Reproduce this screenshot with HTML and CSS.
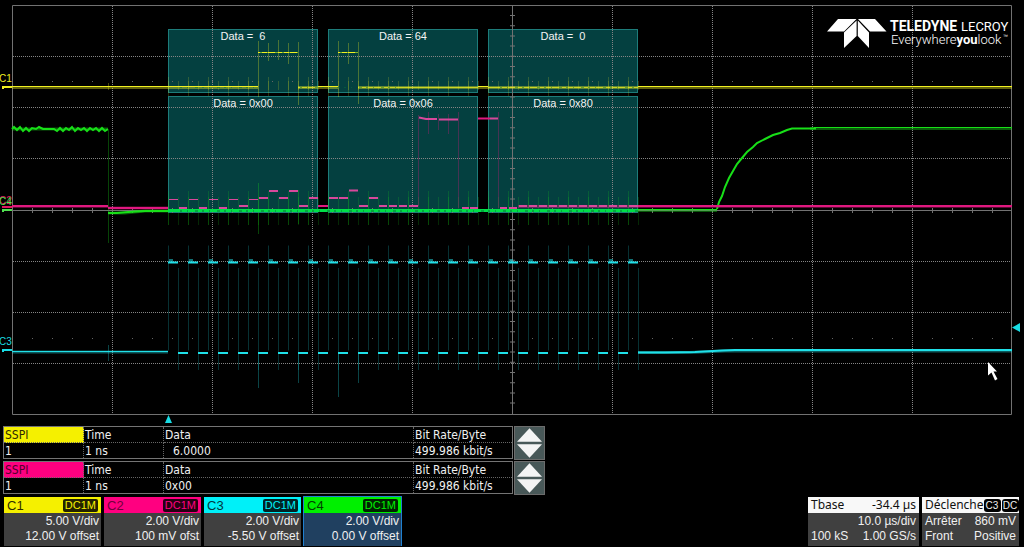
FILE: index.html
```html
<!DOCTYPE html>
<html lang="fr">
<head>
<meta charset="utf-8">
<title>Teledyne LeCroy</title>
<link rel="stylesheet" href="styles.css">
</head>
<body>
<main class="scope">
<svg class="screen" viewBox="0 0 1024 425" role="img" aria-label="SPI waveforms">
  <g class="decode">
    <rect x="168.500" y="29.500" width="149" height="63"/>
    <rect x="328.500" y="29.500" width="149" height="63"/>
    <rect x="488.500" y="29.500" width="149" height="63"/>
    <rect x="168.500" y="96.500" width="149" height="116"/>
    <rect x="328.500" y="96.500" width="149" height="116"/>
    <rect x="488.500" y="96.500" width="149" height="116"/>
  </g>

  <path class="grid-dots" d="M13 56.500H1012M13 107.500H1012M13 158.500H1012M13 261.500H1012M13 312.500H1012M13 363.500H1012M112.500 6V414M212.500 6V414M312.500 6V414M412.500 6V414M612.500 6V414M712.500 6V414M812.500 6V414M912.500 6V414"/>
  <path class="tick-dots" d="M32 81.500H1011M32 338.500H1011"/>
  <path class="grid-line" d="M12.500 5.500H1011.500V414.500H12.500ZM12.500 210.500H1012M512.500 5V414"/>
  <path class="ticks-x" d="M32 210.500H1011"/>
  <path class="ticks-y" d="M512.500 15V411"/>

  <!-- C1, data -->
  <g class="c1">
    <path class="spikes" stroke-width="9" d="M168 85.500H639"/>
    <path class="spikes alt" stroke-width="19" d="M168 86.500H639"/>
    <path class="edge" d="M258.500 41V97M268.500 43V61M278.500 40V60M288.500 43V64M298.500 42V105M338.500 41V97M348.500 43V64M358.500 42V104M108.500 83V90"/>
    <path class="noise" d="M12 87.500H258M298 87.500H338M358 87.500H1012"/>
    <path class="trace thin" d="M12 86.500H258M258 52.500H298M338 52.500H358M318 86.500H338M478 86.500H488M638 86.500H1012"/>
    <path class="trace thin" d="M298 87.500H318M358 87.500H478M488 87.500H638" stroke-opacity=".75"/>
    <path class="speck" d="M260 52.500H298M340 52.500H358M180 87.500H258M300 87.500H400M500 87.500H638"/>
  </g>

  <!-- C4, chip select -->
  <g class="c4">
    <path class="spikes" stroke-width="28" d="M168 211H639"/>
    <path class="spikes alt" stroke-width="34" d="M168 208H639"/>
    <path class="edge" d="M108.500 130V243M258.500 183V234M298.500 190V224"/>
    <path class="noise" stroke-width="4" d="M108 213H125L145 211H168M810 128.500H1012M638 210.500H717"/>
    <path class="noise" stroke-width="4" d="M12 129H108"/>
    <path class="trace" d="M12 129L14 127L17 130L20 127L23 131L26 128L29 131L32 128L36 129L39 127L43 129H54L57 131L60 128L63 131L66 128L69 130L72 127L75 131L78 128L81 130L84 128L87 131L90 128L93 130L96 128L99 131L102 128L105 131L108 129"/>
    <path class="trace" d="M108 213H117L128 212L145 211H168"/>
    <path class="trace bus" d="M168 210.500H638"/>
    <path class="speck" stroke-width="2" d="M180 211H638"/>
    <path class="trace thin" d="M638 209.500H717"/>
    <path class="trace" d="M717 209L719 202L722 196L725 187L729 178L733 171L737 164L742 158L747 152L753 147L757 143L765 139L773 135L780 133L787 130L792 128.500H816"/>
    <path class="trace thin" d="M814 127.500H1012"/>
  </g>

  <!-- C2, data -->
  <g class="c2">
    <path class="edge" d="M418.500 115V206M428.500 112V134M438.500 114V130M448.500 114V134M458.500 112V208M498.500 112V208"/>
    <path class="noise" d="M12 206.500H108M108 208H168M518 206.500H1012"/>
    <path class="trace" d="M12 206H108M108 208H168M318 206H328M478 118.500H490M638 206H1012"/>
    <path class="trace deco thin" d="M169 199.500H178M189 199.500H198M209 199.500H218M229 199.500H238M249 199.500H258"/>
    <path class="trace deco" d="M179 208H187M199 208H207M219 208H227M239 206H248M259 198H268M269 191H278M279 198H288M289 191H298M299 206H308M309 198H318M329 198H338M339 198H348M349 190.500H358M359 206H368M369 198H378M379 206H387M389 206H397M399 206H407M409 206H418M419 117.500L426 119H437M439 119.500H458M462 208H469M470 208H478M490 118.500H498M500 208H507M509 208H517M519 206H527M529 206H537M539 206H547M549 206H557M559 206H567M569 206H577M579 206H587M589 206H597M599 206H607M609 206H617M619 206H627M629 206H638"/>
  </g>

  <!-- C3, clock -->
  <g class="c3">
    <path class="spikes wide" stroke-width="105" d="M168 298H638"/>
    <path class="spikes wide" stroke-width="102" d="M178 319H639"/>
    <path class="edge" d="M258.500 353V388M298.500 353V383M338.500 353V397M358.500 353V383M108.500 345V361"/>
    <path class="noise" stroke-width="4" d="M12 352H168M638 352.500H690L725 351H1012"/>
    <path class="trace thin" d="M12 351.500H168"/>
    <path class="start" d="M169 261H638"/>
    <path class="clock" d="M168 262.500H638"/>
    <path class="clock" d="M178 353H638"/>
    <path class="trace" d="M638 352.500H665L695 352L722 350.500L735 350H1012"/>
  </g>

  <g class="decode-text">
    <text x="243" y="40" xml:space="preserve">Data =  6</text>
    <text x="403" y="40">Data = 64</text>
    <text x="563" y="40" xml:space="preserve">Data =  0</text>
    <text x="243" y="107">Data = 0x00</text>
    <text x="403" y="107">Data = 0x06</text>
    <text x="563" y="107">Data = 0x80</text>
  </g>

  <g class="marker">
    <text class="fill1" x="-1" y="82">C1</text>
    <text class="fill2" x="-1" y="204">C2</text>
    <text class="fill4" x="-1" y="205">C4</text>
    <text class="fill3" x="-1" y="345">C3</text>
    <path class="fill1" d="M2 86H12V88H4V89H2Z"/>
    <path class="fill2" d="M2 206H12V208H2Z"/>
    <path class="fill4" d="M2 209H12V211H4V212H2Z"/>
    <path class="fill3" d="M2 349H12V351H4V352H2Z"/>
    <path class="fill3" d="M168.500 415L172 423H165ZM1012 327.500L1020 323V332Z"/>
  </g>

  <g class="logo">
    <path d="M838 19H856.500L844 31.500H827ZM856.600 20.500V36L844 48V32.500ZM857.800 20.500V36L869 48V32.500ZM858 19H875L886.500 31.500H870Z"/>
    <text class="brand" x="890" y="31">TELEDYNE</text>
    <text class="maker" x="961" y="31">LECROY</text>
    <text class="tag" x="891" y="44">Everywhere<tspan class="you">you</tspan>look</text>
    <text class="tm" x="1003" y="38">™</text>
  </g>

  <path class="pointer" d="M988 362L997 371.500H993.500L997.500 379L995 380.500L991.500 372.500L988 375.500Z"/>
</svg>

<section class="decoders">
  <div class="decoder">
    <table class="yellow">
      <tr><th class="proto" scope="col">SSPI</th><th class="time" scope="col">Time</th><th scope="col">Data</th><th class="rate" scope="col">Bit Rate/Byte</th></tr>
      <tr><td>1</td><td>1 ns</td><td class="padded">6.0000</td><td>499.986 kbit/s</td></tr>
    </table>
    <div class="stepper">
      <button type="button" aria-label="Previous"><svg viewBox="0 0 26 14"><path d="M13 0L26 14H0Z"/></svg></button>
      <button type="button" aria-label="Next"><svg viewBox="0 0 26 14"><path d="M0 0H26L13 14Z"/></svg></button>
    </div>
  </div>
  <div class="decoder">
    <table class="pink">
      <tr><th class="proto" scope="col">SSPI</th><th class="time" scope="col">Time</th><th scope="col">Data</th><th class="rate" scope="col">Bit Rate/Byte</th></tr>
      <tr><td>1</td><td>1 ns</td><td>0x00</td><td>499.986 kbit/s</td></tr>
    </table>
    <div class="stepper">
      <button type="button" aria-label="Previous"><svg viewBox="0 0 26 14"><path d="M13 0L26 14H0Z"/></svg></button>
      <button type="button" aria-label="Next"><svg viewBox="0 0 26 14"><path d="M0 0H26L13 14Z"/></svg></button>
    </div>
  </div>
</section>

<footer class="status">
  <button type="button" class="channel yellow"><span class="head"><span>C1</span><span class="badge">DC1M</span></span><span class="line">5.00 V/div</span><span class="line">12.00 V offset</span></button>
  <button type="button" class="channel pink"><span class="head"><span>C2</span><span class="badge">DC1M</span></span><span class="line">2.00 V/div</span><span class="line">100 mV ofst</span></button>
  <button type="button" class="channel cyan"><span class="head"><span>C3</span><span class="badge">DC1M</span></span><span class="line">2.00 V/div</span><span class="line">-5.50 V offset</span></button>
  <button type="button" class="channel green active"><span class="head"><span>C4</span><span class="badge">DC1M</span></span><span class="line">2.00 V/div</span><span class="line">0.00 V offset</span></button>
  <button type="button" class="info tbase"><span class="head"><span>Tbase</span><span>-34.4 µs</span></span><span class="line">10.0 µs/div</span><span class="line"><span>100 kS</span><span>1.00 GS/s</span></span></button>
  <button type="button" class="info trigger"><span class="head"><span>Déclenche</span><span class="chips"><span class="chip">C3</span><span class="chip">DC</span></span></span><span class="line"><span>Arrêter</span><span>860 mV</span></span><span class="line"><span>Front</span><span>Positive</span></span></button>
</footer>
</main>
</body>
</html>
```
FILE: styles.css
```css
* { box-sizing: border-box; }
body { margin: 0; background: #000; color: #f0f0f0; font: 12px/15px "Liberation Sans", Arial, sans-serif; }
button { margin: 0; padding: 0; border: 0; border-radius: 0; font: inherit; color: inherit; }

.scope { display: flex; flex-direction: column; }
.screen { display: block; width: 100%; height: auto; }
.screen path { fill: none; }

.decode rect { fill: #044040; stroke: #1d7c7a; }
.grid-dots { stroke: #858585; stroke-dasharray: 1 1; }
.tick-dots { stroke: #666; stroke-dasharray: 1 19; }
.grid-line { stroke: #727272; }
.ticks-x { stroke: #727272; stroke-width: 5; stroke-dasharray: 1 19; }
.ticks-y { stroke: #727272; stroke-width: 5; stroke-dasharray: 1 9.200; }

.c1 { stroke: #f0f020; }
.c2 { stroke: #e01880; }
.c3 { stroke: #20e0e8; }
.c4 { stroke: #18e018; }
.trace { stroke-width: 2; }
.trace.thin { stroke-width: 1; }
.trace.deco { stroke: #d8489c; }
.trace.bus { stroke: #00e048; stroke-width: 3; }
.noise { stroke-width: 3; stroke-opacity: .4; }
.edge { stroke-opacity: .3; }
.spikes { stroke-dasharray: 1 9; stroke-opacity: .18; }
.spikes.alt { stroke-dasharray: 1 19; }
.spikes.wide { stroke-dasharray: 1 19; stroke-opacity: .22; }
.speck { stroke: #087038; stroke-opacity: .5; stroke-dasharray: 2 5 1 7 3 4; }
.clock { stroke-width: 2; stroke-dasharray: 10 10; }
.start { stroke-width: 4; stroke-opacity: .5; stroke-dasharray: 4 16; }

.decode-text { fill: #f4f4f4; font-size: 11px; text-anchor: middle; }
.marker { font-size: 10px; }
.screen .fill1 { fill: #f0f020; }
.screen .fill2 { fill: #e01860; }
.screen .fill3 { fill: #18dce4; }
.screen .fill4 { fill: #50e050; }
.screen .logo path, .screen .pointer { fill: #fff; }
.logo { fill: #fff; }
.brand { font: bold 14px Roboto, sans-serif; }
.maker { font: 13px Roboto, sans-serif; }
.tag { font: 300 13px Roboto, sans-serif; }
.you { font-weight: bold; }
.tm { font-size: 5px; }

.decoders { display: flex; flex-direction: column; gap: 1px; padding: 1px 3px 0; }
.decoder { display: flex; gap: 1px; align-items: flex-start; font: 12px/14px "DejaVu Sans Condensed", Tahoma, sans-serif; }
.decoder table { width: 510px; border: 1px solid #747474; border-collapse: collapse; table-layout: fixed; }
.decoder th, .decoder td { height: 16px; padding: 0 1px; font-weight: normal; text-align: left; white-space: nowrap; border: 1px dotted #666; }
.decoder tr:first-child > * { border-top: 0; }
.decoder tr:last-child > * { border-bottom: 0; }
.decoder tr > :first-child { border-left: 0; }
.decoder tr > :last-child { border-right: 0; }
.decoder .proto { width: 80px; color: #302800; }
.decoder .time { width: 80px; }
.decoder .rate { width: 99px; }
.decoder .padded { padding-left: 9px; }
.decoder .yellow .proto { background: #f5f000; }
.decoder .pink .proto { background: #ff0080; color: #50002c; }
.stepper { display: flex; flex-direction: column; gap: 2px; padding: 1px 2px; width: 31px; height: 34px; background: #485858; border: 1px solid #6c6c6c; }
.stepper button { flex: 1; display: flex; background: none; }
.stepper svg { width: 100%; fill: #f4f4f4; }

.status { display: flex; gap: 3px; padding: 0 5px 0 4px; margin-top: 2px; }
.channel, .info { display: flex; flex-direction: column; width: 97px; height: 49px; background: #404040; color: #f0f0f0; }
.head { display: flex; align-items: center; justify-content: space-between; width: 100%; height: 16px; padding: 0 3px; }
.channel .head { background: var(--tone); color: var(--ink); font-size: 13px; }
.line { display: flex; justify-content: flex-end; width: 100%; padding: 1px 2px 0; line-height: 14px; white-space: nowrap; }
.line > span + span { margin-left: auto; }
.channel.yellow { --tone: #f5f000; --ink: #302c00; }
.channel.pink { --tone: #ff0080; --ink: #70003c; }
.channel.cyan { --tone: #00f0f8; --ink: #003840; }
.channel.green { --tone: #00f000; --ink: #004000; }
.badge { padding: 0 2px; border-radius: 2px; background: #000; color: var(--tone); font-size: 11px; line-height: 13px; opacity: .85; }
.active { background: #204060; outline: 1px solid #2080d0; }
.info .head { background: #f8f8f8; color: #101010; font: 12px/16px "Noto Sans", sans-serif; white-space: nowrap; }
.info .line { padding: 1px 3px 0; }
.tbase { width: 111px; margin-left: auto; }
.trigger .head { padding: 0 1px 0 3px; }
.chips { display: flex; gap: 1px; }
.chip { width: 17px; border-radius: 3px; background: #000; color: #eee; font: 10px/13px "Liberation Sans", sans-serif; text-align: center; }
```
